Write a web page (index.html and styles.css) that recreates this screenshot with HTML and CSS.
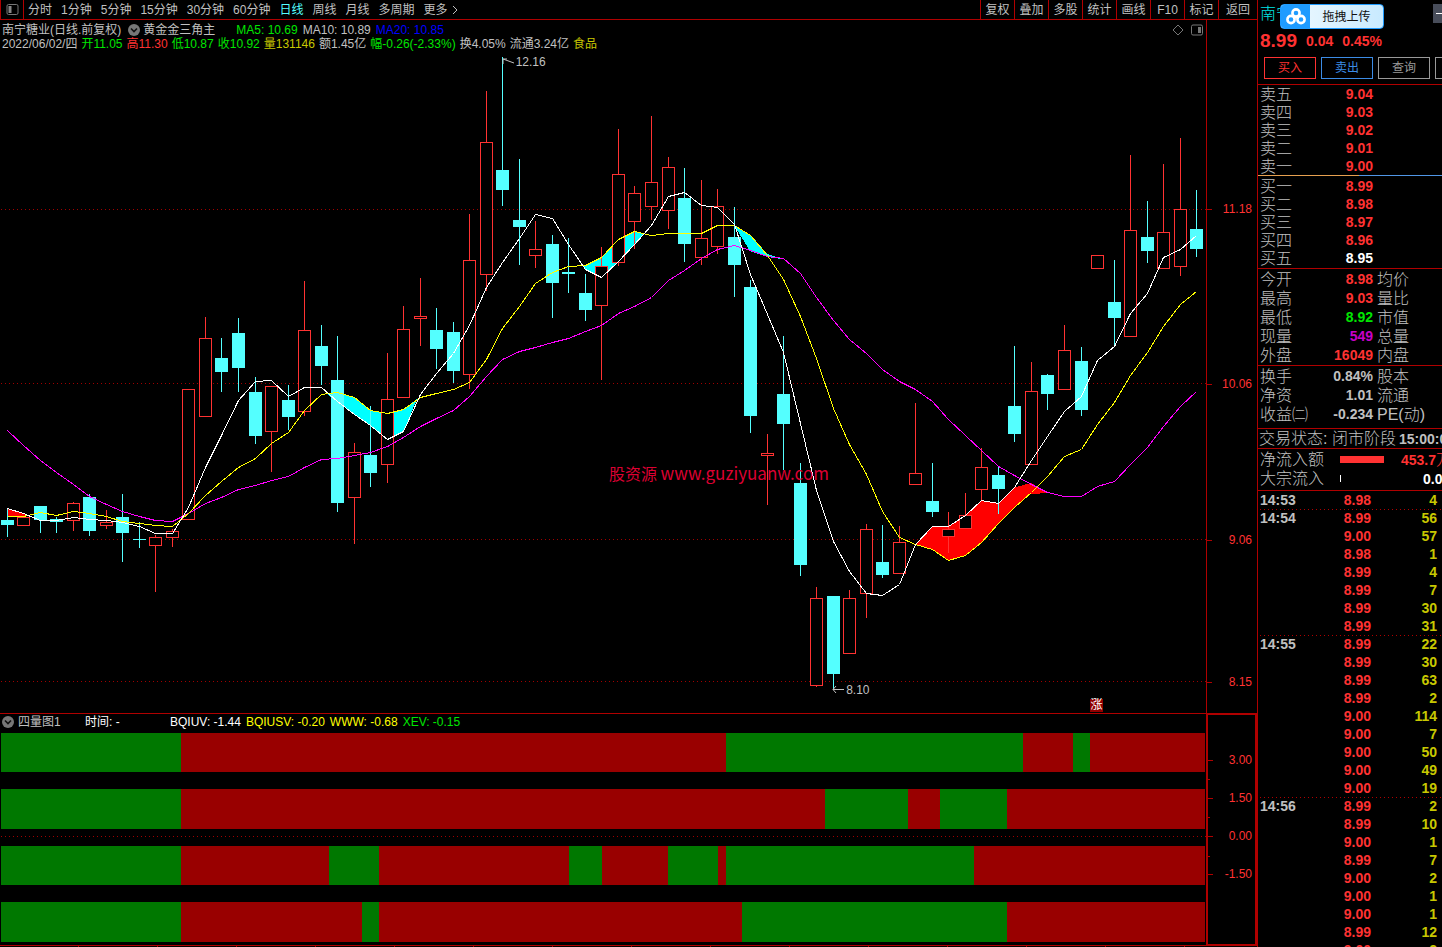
FILE: index.html
```html
<!DOCTYPE html>
<html lang="zh-CN">
<head>
<meta charset="utf-8">
<title>南宁糖业 日线</title>
<link rel="stylesheet" href="styles.css">
</head>
<body>
<div class="app">
  <main class="main">
    <nav class="toolbar">
      <button class="toggle" aria-label="侧栏">
        <svg width="13" height="11" viewBox="0 0 13 11"><rect x="1" y="0.5" width="11" height="10" rx="1.5" fill="none" stroke="#777"/><rect x="2.5" y="2" width="3" height="7" fill="#888"/></svg>
      </button>
      <div class="periods">
        <button>分时</button><button>1分钟</button><button>5分钟</button><button>15分钟</button><button>30分钟</button><button>60分钟</button><button class="active">日线</button><button>周线</button><button>月线</button><button>多周期</button><button class="more">更多<svg width="6" height="10" viewBox="0 0 6 10"><path d="M1 1L5 5L1 9" fill="none" stroke="#c0c0c0"/></svg></button>
      </div>
      <div class="tools">
        <button>复权</button><button>叠加</button><button>多股</button><button>统计</button><button>画线</button><button>F10</button><button>标记</button><button class="back">返回</button>
      </div>
    </nav>

    <section class="chart">
      <div class="plot">
        <svg id="kline" class="canvas" viewBox="0 20 1206 693" preserveAspectRatio="none" shape-rendering="crispEdges"></svg>
        <header class="info">
          <div class="line">
            <span>南宁糖业(日线.前复权)</span>
            <svg class="chev" width="12" height="12" viewBox="0 0 12 12"><circle cx="6" cy="6" r="6" fill="#777"/><path d="M3 4.5L6 7.5L9 4.5" fill="none" stroke="#111" stroke-width="1.6"/></svg>
            <span class="name">黄金金三角主</span>
            <span class="green">MA5: 10.69</span><span>MA10: 10.89</span><span class="blue">MA20: 10.85</span>
            <span class="corner">
              <svg width="12" height="12" viewBox="0 0 12 12"><path d="M6 1L11 6L6 11L1 6Z" fill="none" stroke="#777"/></svg>
              <svg width="12" height="12" viewBox="0 0 12 12"><rect x="0.5" y="1" width="11" height="10" rx="1.5" fill="none" stroke="#777"/><rect x="7" y="3" width="3" height="6" fill="#777"/></svg>
            </span>
          </div>
          <div class="line second">
            <span>2022/06/02/四</span><span class="green">开11.05</span><span class="red">高11.30</span><span class="green">低10.87</span><span class="green">收10.92</span><span class="gold">量131146</span><span>额1.45亿</span><span class="green">幅-0.26(-2.33%)</span><span>换4.05%</span><span>流通3.24亿</span><span class="gold">食品</span>
          </div>
        </header>
        <span class="mark high"><svg width="12" height="8" viewBox="0 0 12 8"><path d="M1 1L12 5M1 1H5M1 1V6" fill="none" stroke="#c0c0c0"/></svg>12.16</span>
        <span class="mark low"><svg width="12" height="9" viewBox="0 0 12 9"><path d="M1 4.5H12M4 1L1 4.5L4 8" fill="none" stroke="#c0c0c0"/></svg>8.10</span>
        <span class="watermark">股资源 <b>www.guziyuanw.com</b></span>
        <span class="event">涨</span>
      </div>
      <div class="axis" id="price-axis"></div>
    </section>

    <section class="sub">
      <div class="subplot">
        <header class="line">
          <svg class="chev" width="12" height="12" viewBox="0 0 12 12"><circle cx="6" cy="6" r="6" fill="#777"/><path d="M3 4.5L6 7.5L9 4.5" fill="none" stroke="#111" stroke-width="1.6"/></svg>
          <span class="subname">四量图1</span><span class="time">时间: -</span>
          <span class="white">BQIUV: -1.44</span><span class="yellow">BQIUSV: -0.20</span><span class="yellow">WWW: -0.68</span><span class="green">XEV: -0.15</span>
        </header>
        <div class="bars" id="bars"></div>
        <div class="timeline"></div>
      </div>
      <div class="axis boxed" id="sub-axis"></div>
    </section>
  </main>

  <aside class="side">
    <header class="quote">
      <div class="stock">南宁糖业</div>
      <button class="upload"><span class="cloud"><svg width="20" height="17" viewBox="0 0 20 17"><g fill="none" stroke="#fff" stroke-width="2.6"><circle cx="10" cy="5" r="3.6"/><circle cx="5" cy="11.5" r="3.6"/><circle cx="15" cy="11.5" r="3.6"/></g><circle cx="10" cy="9.5" r="1.3" fill="#fff"/></svg></span><span class="uptext">拖拽上传</span></button>
      <button class="min" aria-label="最小化"></button>
      <div class="price"><strong>8.99</strong><span>0.04</span><span>0.45%</span></div>
      <div class="actions"><button class="buy">买入</button><button class="sell">卖出</button><button>查询</button><button aria-label="更多"></button></div>
    </header>

    <table class="book">
      <tr><th>卖五</th><td>9.04</td><td></td></tr>
      <tr><th>卖四</th><td>9.03</td><td></td></tr>
      <tr><th>卖三</th><td>9.02</td><td></td></tr>
      <tr><th>卖二</th><td>9.01</td><td></td></tr>
      <tr><th>卖一</th><td>9.00</td><td></td></tr>
    </table>
    <div class="ratio"></div>
    <table class="book ruled">
      <tr><th>买一</th><td>8.99</td><td></td></tr>
      <tr><th>买二</th><td>8.98</td><td></td></tr>
      <tr><th>买三</th><td>8.97</td><td></td></tr>
      <tr><th>买四</th><td>8.96</td><td></td></tr>
      <tr><th>买五</th><td class="white">8.95</td><td></td></tr>
    </table>
    <table class="book stats ruled">
      <tr><th>今开</th><td>8.98</td><th>均价</th></tr>
      <tr><th>最高</th><td>9.03</td><th>量比</th></tr>
      <tr><th>最低</th><td class="green">8.92</td><th>市值</th></tr>
      <tr><th>现量</th><td class="purple">549</td><th>总量</th></tr>
      <tr><th>外盘</th><td>16049</td><th>内盘</th></tr>
    </table>
    <table class="book stats">
      <tr><th>换手</th><td class="gray">0.84%</td><th>股本</th></tr>
      <tr><th>净资</th><td class="gray">1.01</td><th>流通</th></tr>
      <tr><th>收益㈡</th><td class="gray">-0.234</td><th>PE(动)</th></tr>
    </table>
    <div class="status">交易状态: 闭市阶段<b>15:00:0</b></div>
    <div class="flows">
      <div class="flow"><span>净流入额</span><i class="meter"></i><b class="red">453.7<em>万</em></b></div>
      <div class="flow"><span>大宗流入</span><i class="meter none"></i><b class="white zero">0.0</b></div>
    </div>
    <table class="ticks">
      <tr><th>14:53</th><td>8.98</td><td>4</td></tr>
      <tr class="new"><th>14:54</th><td>8.99</td><td>56</td></tr>
      <tr><th></th><td>9.00</td><td>57</td></tr>
      <tr><th></th><td>8.98</td><td>1</td></tr>
      <tr><th></th><td>8.99</td><td>4</td></tr>
      <tr><th></th><td>8.99</td><td>7</td></tr>
      <tr><th></th><td>8.99</td><td>30</td></tr>
      <tr><th></th><td>8.99</td><td>31</td></tr>
      <tr class="new"><th>14:55</th><td>8.99</td><td>22</td></tr>
      <tr><th></th><td>8.99</td><td>30</td></tr>
      <tr><th></th><td>8.99</td><td>63</td></tr>
      <tr><th></th><td>8.99</td><td>2</td></tr>
      <tr><th></th><td>9.00</td><td>114</td></tr>
      <tr><th></th><td>9.00</td><td>7</td></tr>
      <tr><th></th><td>9.00</td><td>50</td></tr>
      <tr><th></th><td>9.00</td><td>49</td></tr>
      <tr><th></th><td>9.00</td><td>19</td></tr>
      <tr class="new"><th>14:56</th><td>8.99</td><td>2</td></tr>
      <tr><th></th><td>8.99</td><td>10</td></tr>
      <tr><th></th><td>9.00</td><td>1</td></tr>
      <tr><th></th><td>8.99</td><td>7</td></tr>
      <tr><th></th><td>9.00</td><td>2</td></tr>
      <tr><th></th><td>9.00</td><td>1</td></tr>
      <tr><th></th><td>9.00</td><td>1</td></tr>
      <tr><th></th><td>8.99</td><td>12</td></tr>
      <tr><th></th><td>9.00</td><td>2</td></tr>
    </table>
  </aside>
</div>
<script src="chart.js"></script>
</body>
</html>
```

FILE: styles.css
```css
* { box-sizing: border-box; }
body {
  margin: 0;
  background: #000;
  color: #c0c0c0;
  font: 12px/14px "Liberation Sans", "Noto Sans CJK SC", sans-serif;
  white-space: nowrap;
  overflow: hidden;
}
button {
  margin: 0;
  padding: 0;
  border: 0;
  background: none;
  color: inherit;
  font: inherit;
  cursor: pointer;
}
svg { display: block; flex: none; }
.green { color: #00e600; }
.red { color: #ff3232; }
.blue { color: #0000ff; }
.gold { color: #c8c800; }
.yellow { color: #ffff00; }
.white { color: #fff; }

.app {
  display: grid;
  grid-template-columns: minmax(0, 1fr) 185px;
  height: 100vh;
}
.main {
  display: grid;
  grid-template-rows: 20px minmax(0, 1fr) 233px;
  min-width: 0;
  height: 100vh;
}

/* toolbar */
.toolbar {
  display: flex;
  border-bottom: 1px solid #b00000;
}
.toggle {
  display: flex;
  align-items: center;
  justify-content: center;
  width: 24px;
  border-left: 1px solid #b00000;
  border-right: 1px solid #b00000;
}
.periods {
  display: flex;
  align-items: center;
  gap: 9px;
  padding-left: 4px;
}
.active { color: #54ffff; }
.more { display: flex; align-items: center; gap: 4px; }
.tools { display: flex; margin-left: auto; }
.tools button { width: 34px; border-left: 1px solid #b00000; }
.tools .back { width: 39px; }

/* price chart */
.chart, .sub {
  display: grid;
  grid-template-columns: minmax(0, 1fr) 51px;
}
.plot {
  position: relative;
  border-bottom: 1px solid #b00000;
}
.canvas {
  position: absolute;
  inset: 0;
  width: 100%;
  height: 100%;
}
.info { position: relative; padding: 3px 3px 0 2px; }
.line { display: flex; align-items: center; gap: 5px; }
.info .chev { margin-left: 2px; }
.name { margin: 0 16px 0 -2px; }
.second { gap: 4px; }
.corner { display: flex; gap: 7px; margin-left: auto; }
.mark {
  position: absolute;
  display: flex;
  align-items: center;
  gap: 2px;
}
.mark.high { left: 41.6%; top: 5%; }
.mark.low { left: 69%; top: 95.6%; }
.watermark {
  position: absolute;
  left: 50.5%;
  top: 63.6%;
  color: #dc0032;
  font: 16px/24px "Noto Sans CJK SC", sans-serif;
}
.watermark b { font-weight: 400; font-size: 17px; }
.event {
  position: absolute;
  right: 103px;
  bottom: 1px;
  width: 13px;
  height: 13px;
  background: #900000;
  color: #fff;
  font-size: 12px;
  line-height: 13px;
  text-align: center;
}
.axis {
  position: relative;
  border-left: 1px solid #b00000;
  color: #ff3232;
}
.axis span {
  position: absolute;
  right: 5px;
  transform: translateY(-50%);
}
.axis i {
  position: absolute;
  left: 0;
  width: 5px;
  height: 1px;
  background: #b00000;
}
.axis i.short { width: 2px; }

/* lower indicator */
.subplot {
  position: relative;
  display: flex;
  flex-direction: column;
}
.subplot .line { height: 19px; padding: 0 2px 3px; }
.subname { width: 62px; margin-left: -1px; }
.time { width: 80px; color: #fff; }
.bars {
  flex: 1;
  display: flex;
  flex-direction: column;
  justify-content: space-between;
  padding: 0 1px 3px;
}
.bar { display: flex; height: 39px; }
.bar:nth-child(even) { height: 40px; }
.up { background: #990000; }
.down { background: #007800; }
.bars hr {
  position: absolute;
  left: 0;
  right: 0;
  top: 122px;
  height: 1px;
  margin: 0;
  border: 0;
  background: repeating-linear-gradient(90deg, transparent 0 1px, #a00000 1px 2px, transparent 2px 4px);
}
.timeline {
  height: 2px;
  border-top: 1px solid #b00000;
  background: repeating-linear-gradient(90deg, transparent 0 78px, #b00000 78px 79px);
}
.boxed {
  height: 233px;
  margin-top: -1px;
  border: 2px solid #b00000;
}
.boxed span { right: 3px; }

/* quote panel */
.side {
  height: 100vh;
  min-width: 0;
  overflow: hidden;
  border-left: 1px solid #b00000;
  font: 16px/18px "Liberation Sans", "Noto Sans CJK SC", sans-serif;
}
.quote {
  position: relative;
  height: 85px;
  padding: 5px 0 0 2px;
  border-bottom: 1px solid #b00000;
}
.stock { color: #00e6e6; font-weight: 300; }
.upload {
  position: absolute;
  left: 22px;
  top: 4px;
  display: flex;
  width: 104px;
  height: 25px;
  overflow: hidden;
  border: 1px solid #1e9bff;
  border-radius: 4px;
  background: linear-gradient(90deg, #f0faff, #c8eaff);
  color: #111;
  font-size: 12px;
}
.cloud {
  display: flex;
  align-items: center;
  justify-content: center;
  width: 29px;
  height: 100%;
  background: #1e9bff;
}
.uptext { flex: 1; line-height: 24px; }
.min {
  position: absolute;
  right: 0;
  top: 4px;
  width: 9px;
  height: 19px;
  background: linear-gradient(#fff, #fff) 3px 9px / 6px 1px no-repeat #484d5a;
}
.price {
  display: flex;
  align-items: center;
  gap: 9px;
  height: 20px;
  margin-top: 8px;
  color: #ff3232;
  font-size: 14px;
  font-weight: 700;
}
.price strong { font-size: 19px; }
.actions {
  display: flex;
  gap: 5px;
  padding: 6px 0 0 4px;
}
.actions button {
  flex: none;
  width: 52px;
  height: 22px;
  border: 1px solid #999;
  color: #999;
  font-size: 12px;
  line-height: 18px;
}
.actions .buy { border-color: #ff3232; color: #ff3232; }
.actions .sell { border-color: #3c8ce6; color: #3c8ce6; }

table {
  width: 100%;
  table-layout: fixed;
  border-collapse: collapse;
}
th, td { height: 18px; padding: 0; line-height: 18px; }
th {
  width: 52px;
  padding-left: 2px;
  font-weight: 300;
  text-align: left;
}
.book th { padding-top: 2px; line-height: 16px; }
td {
  width: 63px;
  color: #ff3232;
  font-size: 14px;
  font-weight: 700;
  text-align: right;
}
td.white { color: #fff; }
td.green { color: #00e600; }
td.purple { color: #c800c8; }
td.gray { color: #c0c0c0; }
.ratio {
  height: 1px;
  margin-bottom: 1px;
  background: linear-gradient(90deg, #e6a050 0 55%, #5096e6 55%);
}
.book td:last-child, .stats th:last-child { width: auto; }
.ruled { margin-bottom: 1px; }
.stats { border-top: 1px solid #b00000; }
.stats th, .stats td { height: 19px; }
.stats td { padding-top: 2px; line-height: 17px; }
.stats th:last-child { padding-left: 4px; }
.status {
  height: 21px;
  margin-top: 5px;
  padding-left: 1px;
  border: solid #b00000;
  border-width: 1px 0;
  font-weight: 300;
  line-height: 19px;
}
.status b { margin-left: 3px; font-size: 14px; font-weight: 700; }
.flows { height: 42px; padding-top: 1px; border-bottom: 1px solid #b00000; }
.flow {
  display: flex;
  align-items: center;
  height: 19px;
  padding-left: 2px;
}
.flow span { width: 80px; flex: none; font-weight: 300; }
.flow b { margin-left: 17px; font-size: 14px; }
.flow em { font-style: normal; font-weight: 300; font-size: 16px; }
.flow .zero { margin-left: 82px; }
.meter { flex: none; width: 44px; height: 7px; background: #ff3232; }
.meter.none { width: 1px; background: #fff; }

.ticks th { font-size: 14px; font-weight: 700; }
.ticks td { width: 61px; }
.ticks td:last-child { width: auto; padding-right: 5px; color: #c8c800; }
.ticks .new { background: repeating-linear-gradient(90deg, transparent 0 2px, #b00000 2px 3px, transparent 3px 4px) top / 100% 1px no-repeat; }
```

FILE: chart.js
```js
// Candles: [rising, high, low, body top, body bottom]
const candles = [
[0,509,537,520,525],[1,517,526,517,526],[0,506,533,506,520],[0,517,533,519,522],[1,502,531,503,521],
[0,494,536,497,531],[1,510,529,522,526],[0,494,562,517,533],[0,522,548,539,540],[1,535,592,537,546],
[1,529,547,531,538],[1,389,520,389,520],[1,317,417,338,417],[0,338,392,358,372],[0,318,392,333,368],
[0,377,444,392,436],[1,386,472,386,432],[0,385,430,400,417],[1,281,416,330,412],[0,325,385,346,366],
[0,336,512,380,503],[1,443,544,452,498],[0,406,487,455,473],[1,353,483,399,465],[1,306,398,329,398],
[1,278,346,316,319],[0,308,369,330,349],[0,322,383,332,371],[1,214,389,260,375],[1,91,291,142,275],
[0,57,206,170,190],[0,159,265,220,227],[1,221,268,249,256],[0,235,318,244,283],[0,238,293,272,274],
[0,274,321,293,310],[1,247,380,266,306],[1,129,266,174,263],[1,186,249,193,222],[1,116,220,182,207],
[1,157,229,167,211],[0,168,262,198,244],[1,180,265,238,258],[1,189,254,206,247],[0,207,297,237,265],
[0,280,433,287,416],[1,434,505,453,456],[0,336,470,394,424],[0,463,576,483,565],[1,587,687,598,686],
[0,596,689,596,674],[1,590,654,598,654],[1,524,618,529,594],[0,525,578,562,575],[1,526,574,542,574],
[1,403,485,473,485],[0,463,517,501,512],[1,512,553,529,537],[1,493,529,515,529],[1,448,500,467,490],
[0,467,514,475,489],[0,346,442,406,434],[1,362,465,391,465],[0,374,410,375,394],[1,325,390,350,390],
[0,347,416,361,410],[1,255,269,255,269],[0,260,346,302,318],[1,155,337,230,337],[0,201,263,237,251],
[1,164,269,232,269],[1,138,276,209,267],[0,190,257,229,249]];

const ma5 = [508,513,520,520,517,519,520,522,526,533,533,507,467,435,400,381,380,396,387,387,401,414,425,439,431,394,373,353,325,287,262,238,214,218,244,269,277,261,244,225,196,192,205,207,224,274,314,352,423,490,541,571,593,595,584,544,526,526,515,500,503,487,460,436,411,396,360,346,313,293,257,249,235];
const ma10 = [516,516,512,515,511,513,516,521,523,525,526,513,495,481,467,458,443,432,410,394,392,397,410,413,409,397,393,389,382,359,328,306,283,272,266,265,257,239,231,235,233,233,233,225,225,235,255,279,316,358,408,444,474,511,537,544,549,560,555,542,523,507,492,476,456,449,424,402,375,352,326,304,291];
const ma20 = [430,445,460,472,484,496,504,511,516,520,521,513,503,497,489,485,480,476,467,459,458,455,452,446,437,426,418,410,396,376,359,351,347,342,338,331,325,313,306,297,280,270,258,249,245,250,256,258,273,297,320,339,353,369,381,389,401,419,435,450,466,475,484,492,496,496,486,481,464,447,426,406,391];

const X = i => Math.floor(7.23 + 16.52 * i);
const pts = (line, from, to) => line.slice(from, to + 1).map((y, k) => [X(from + k) + 0.5, y + 0.5]);
const poly = (p, color) => `<polygon points="${p.join(' ')}" fill="${color}"/>`;

let out = '';
[209, 383, 539, 681].forEach(y => {
  out += `<line x1="1" x2="1206" y1="${y + 0.5}" y2="${y + 0.5}" stroke="#a00000" stroke-dasharray="1 3"/>`;
});

// Regions enclosed by crossing averages
out += poly([[7, 508], [23, 513], [29, 516], [7, 517]], '#ff0000');
out += poly([[327, 394], ...pts(ma10, 20, 24), [417, 399], ...pts(ma5, 20, 24).reverse()], '#00ffff');
out += poly([[583, 266], ...pts(ma10, 35, 38), [644, 234], ...pts(ma5, 35, 38).reverse()], '#00ffff');
out += poly([[734, 225], [751, 235], [767, 254], [782, 259], [767, 257], [750, 251]], '#00ffff');
out += poly([...pts(ma5, 55, 61), [1031, 483], [1048, 493], [1031, 494], ...pts(ma10, 55, 61).reverse()], '#ff0000');

candles.forEach(([up, high, low, top, bottom], i) => {
  const x = X(i);
  const color = up ? '#ff3232' : '#54ffff';
  if (high < top) out += `<rect x="${x}" y="${high}" width="1" height="${top - high}" fill="${color}"/>`;
  if (low > bottom) out += `<rect x="${x}" y="${bottom}" width="1" height="${low - bottom}" fill="${color}"/>`;
  out += up
    ? `<rect x="${x - 5.5}" y="${top + 0.5}" width="12" height="${bottom - top - 1}" fill="#000" stroke="${color}"/>`
    : `<rect x="${x - 6}" y="${top}" width="13" height="${bottom - top}" fill="${color}"/>`;
});

[[ma20, '#ff00ff'], [ma10, '#ffff00'], [ma5, '#ffffff']].forEach(([line, color]) => {
  out += `<polyline points="${pts(line, 0, 72).join(' ')}" fill="none" stroke="${color}"/>`;
});
document.getElementById('kline').innerHTML = out;

// Axis labels: [text, position in percent]
const axis = (id, labels, minor) => {
  document.getElementById(id).innerHTML =
    labels.map(([t, p]) => `<i style="top:${p}%"></i><span style="top:${p}%">${t}</span>`).join('') +
    minor.map(p => `<i class="short" style="top:${p}%"></i>`).join('');
};
axis('price-axis', [['11.18', 27.3], ['10.06', 52.4], ['9.06', 74.9], ['8.15', 95.4]], []);
axis('sub-axis', [['3.00', 19.5], ['1.50', 36.2], ['0.00', 52.9], ['-1.50', 69.6]], [27.8, 44.7, 61.4]);

// Segment widths alternate down / up
const rows = [
  [180, 545, 297, 50, 17, 115],
  [180, 644, 83, 32, 67, 198],
  [180, 148, 50, 190, 33, 66, 50, 8, 248, 231],
  [180, 181, 17, 363, 265, 198]];
document.getElementById('bars').innerHTML = rows.map(r =>
  '<div class="bar">' + r.map((w, i) =>
    `<div class="${i % 2 ? 'up' : 'down'}" style="flex:${w} 1 0"></div>`).join('') + '</div>').join('') + '<hr>';
```
